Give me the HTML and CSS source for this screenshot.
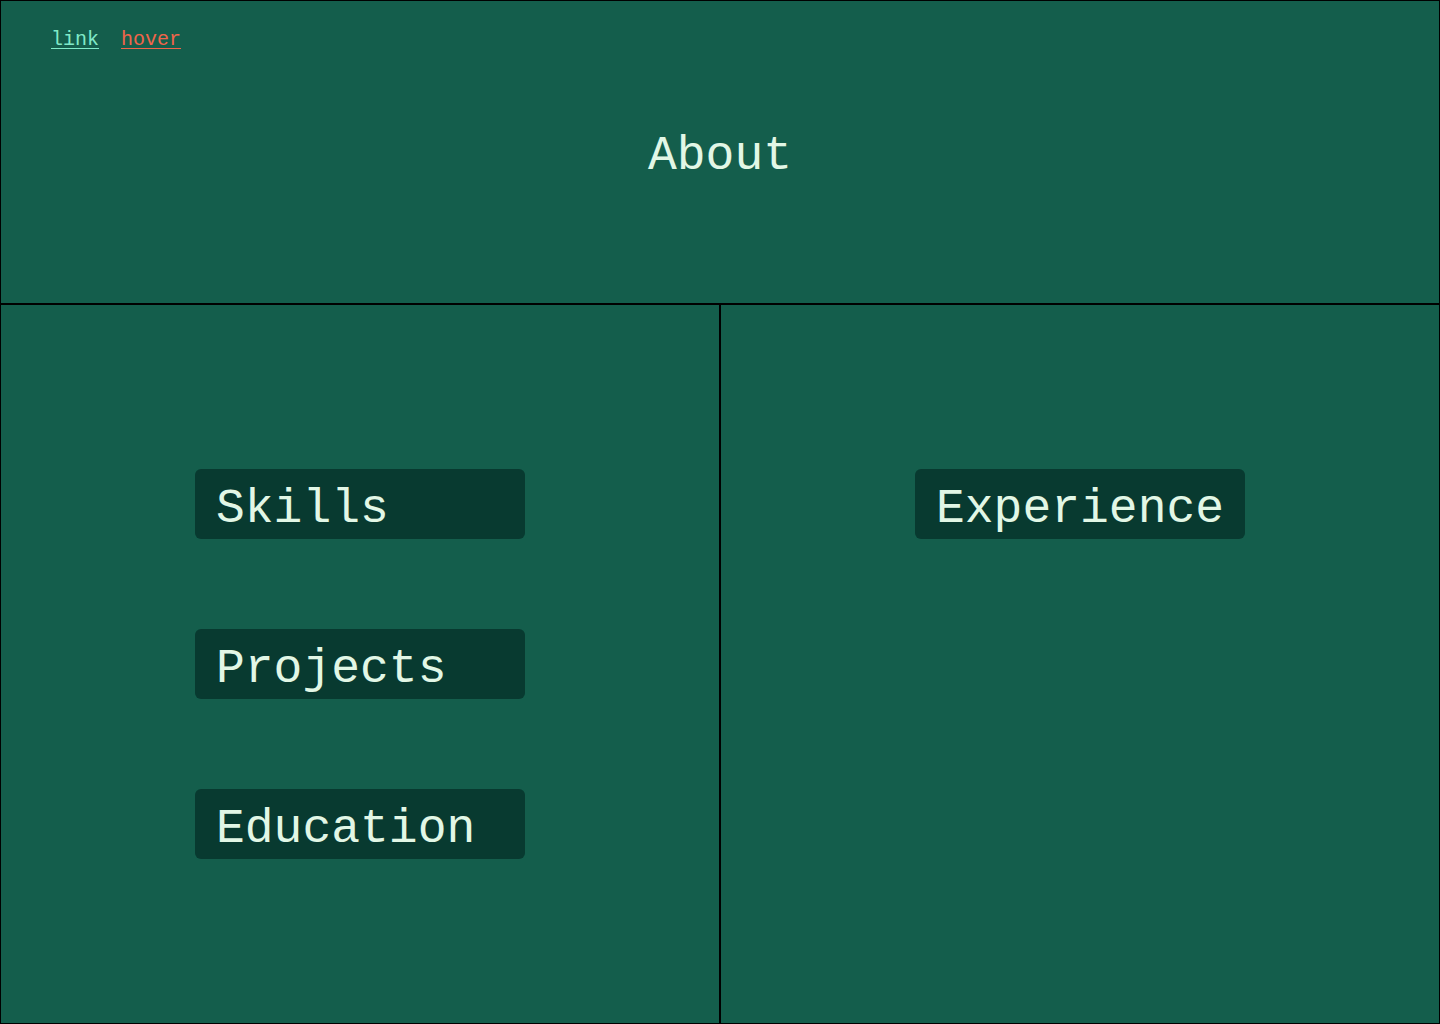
FILE: index.html
```html
<!DOCTYPE html>
<html lang="en">
<head>
<meta charset="utf-8">
<title>About</title>
<link rel="stylesheet" href="styles.css">
</head>
<body>
<div class="page">
  <header class="header">
    <nav class="nav">
      <a class="nav-link" href="#">link</a>
      <a class="nav-link nav-link--hover" href="#">hover</a>
    </nav>
    <h1 class="title">About</h1>
  </header>
  <main class="panels">
    <section class="panel panel--left">
      <a class="tile" href="#">Skills</a>
      <a class="tile" href="#">Projects</a>
      <a class="tile" href="#">Education</a>
    </section>
    <section class="panel panel--right">
      <a class="tile tile--center" href="#">Experience</a>
    </section>
  </main>
</div>
</body>
</html>
```

FILE: styles.css
```css
html, body {
  margin: 0;
  padding: 0;
}

body {
  width: 1440px;
  height: 1024px;
  background: #145e4c;
  font-family: "Liberation Mono", "DejaVu Sans Mono", monospace;
  color: #e2f7e6;
  overflow: hidden;
}

.page {
  display: grid;
  grid-template-rows: 304px 720px;
  width: 1440px;
  height: 1024px;
}

.header {
  box-sizing: border-box;
  border: 1px solid #000;
  display: grid;
  grid-template-rows: 1fr auto 1fr;
  justify-items: center;
}

.nav {
  justify-self: start;
  align-self: start;
  padding: 27px 0 0 50px;
  display: flex;
  gap: 22px;
  font-size: 20px;
}

.nav-link {
  color: #80eac8;
  text-decoration: underline;
  text-decoration-thickness: 1px;
  text-underline-offset: 3px;
}

.nav-link--hover {
  color: #f0654a;
}

.title {
  grid-row: 2;
  margin: 0;
  padding-top: 8px;
  font-size: 48px;
  font-weight: 400;
  line-height: 56px;
  color: #e2f7e6;
}

.panels {
  display: grid;
  grid-template-columns: 720px 720px;
}

.panel {
  box-sizing: border-box;
  border: 1px solid #000;
  display: flex;
  flex-direction: column;
  align-items: center;
  gap: 90px;
}

.panel--left {
  justify-content: center;
}

.panel--right {
  justify-content: flex-start;
  padding-top: 164px;
}

.tile {
  box-sizing: border-box;
  width: 330px;
  height: 70px;
  padding: 11px 20px 0 21px;
  line-height: 58px;
  font-size: 48px;
  background: #083a30;
  border-radius: 6px;
  color: #e2f7e6;
  text-decoration: none;
  white-space: nowrap;
}
```
